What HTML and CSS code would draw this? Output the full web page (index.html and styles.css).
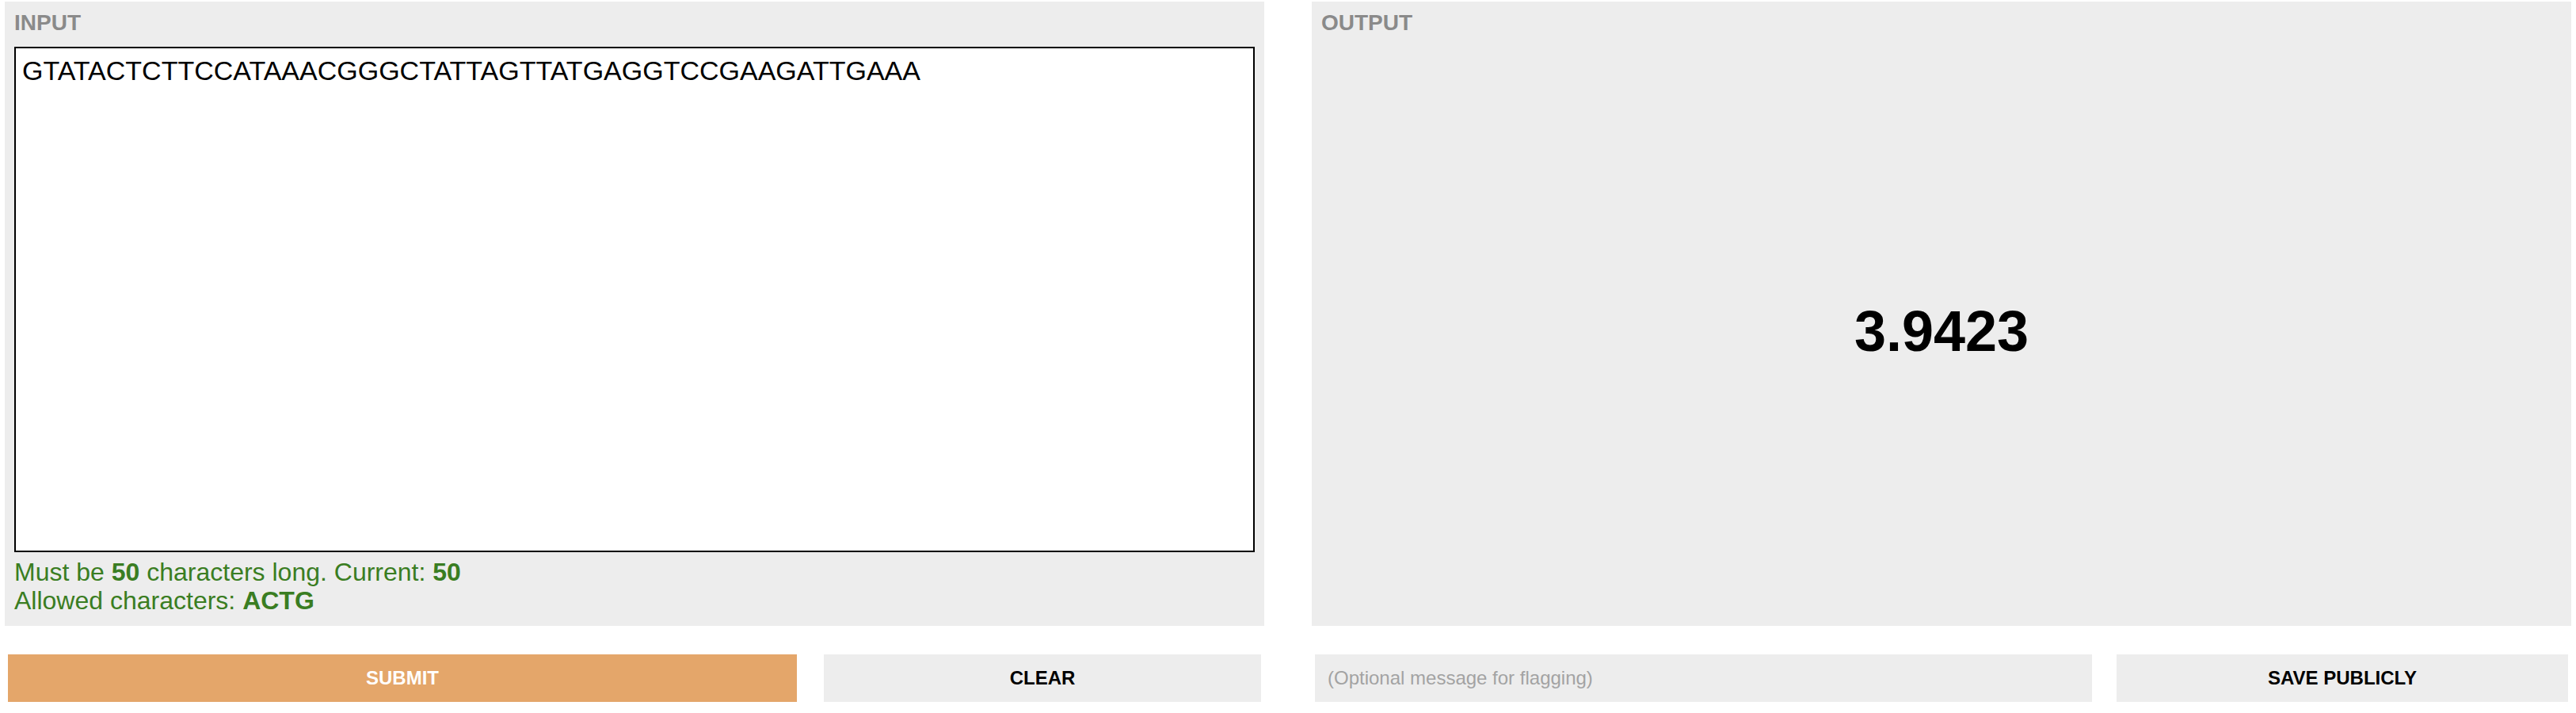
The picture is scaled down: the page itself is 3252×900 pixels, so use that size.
FILE: index.html
```html
<!DOCTYPE html>
<html lang="en">
<head>
<meta charset="utf-8">
<title>Interface</title>
<link rel="stylesheet" href="styles.css">
</head>
<body>
  <div class="panels">
    <section class="panel panel-input">
      <div class="panel-label">Input</div>
      <textarea class="seq-box" spellcheck="false">GTATACTCTTCCATAAACGGGCTATTAGTTATGAGGTCCGAAGATTGAAA</textarea>
      <div class="hint">
        <div>Must be <b>50</b> characters long. Current: <b>50</b></div>
        <div>Allowed characters: <b>ACTG</b></div>
      </div>
    </section>
    <section class="panel panel-output">
      <div class="panel-label">Output</div>
      <div class="output-body">
        <div class="output-value">3.9423</div>
      </div>
    </section>
  </div>
  <div class="actions">
    <div class="group group-left">
      <button class="btn btn-submit">Submit</button>
      <button class="btn btn-clear">Clear</button>
    </div>
    <div class="group group-right">
      <input class="flag-input" type="text" placeholder="(Optional message for flagging)">
      <button class="btn btn-save">Save Publicly</button>
    </div>
  </div>
</body>
</html>
```

FILE: styles.css
```css
html, body {
  margin: 0;
  padding: 0;
  background: #ffffff;
}

body {
  font-family: "Liberation Sans", Arial, Helvetica, sans-serif;
  color: #000;
}

.panels {
  display: flex;
  gap: 60px;
  padding: 2px 6px 0 6px;
}

.panel {
  flex: 1 1 0;
  height: 788px;
  background: #ededed;
  box-sizing: border-box;
  padding: 0 12px;
  display: flex;
  flex-direction: column;
}

.panel-label {
  margin-top: 11px;
  font-size: 28px;
  line-height: 32px;
  font-weight: bold;
  text-transform: uppercase;
  color: #8a8a8a;
}

.seq-box {
  display: block;
  margin-top: 14px;
  height: 638px;
  width: 100%;
  box-sizing: border-box;
  border: 2px solid #000;
  border-radius: 0;
  background: #fff;
  padding: 9px 8px;
  font-family: "Liberation Sans", Arial, Helvetica, sans-serif;
  font-size: 34px;
  line-height: 39px;
  color: #000;
  resize: none;
  outline: none;
}

.hint {
  margin-top: 7px;
  font-size: 32px;
  line-height: 36px;
  color: #3a7d22;
}

.hint b {
  font-weight: bold;
}

.output-body {
  flex: 1;
  display: flex;
  align-items: center;
  justify-content: center;
}

.output-value {
  font-size: 72px;
  font-weight: bold;
  color: #000;
}

.actions {
  display: flex;
  gap: 60px;
  padding: 0 6px;
  margin-top: 36px;
}

.group {
  flex: 1 1 0;
  display: flex;
  height: 60px;
}

.group-left {
  padding: 0 5px 0 4px;
  gap: 34px;
}

.group-right {
  padding: 0 4px 0 3px;
  gap: 31px;
}

.btn {
  border: none;
  border-radius: 0;
  margin: 0;
  padding: 0;
  height: 60px;
  font-family: "Liberation Sans", Arial, Helvetica, sans-serif;
  font-size: 24px;
  font-weight: bold;
  text-transform: uppercase;
  background: #ededed;
  color: #000;
  cursor: pointer;
}

.btn-submit {
  flex: 0 0 996px;
  background: #e4a66a;
  color: #fff;
}

.btn-clear {
  flex: 1 1 0;
}

.flag-input {
  flex: 0 0 981px;
  box-sizing: border-box;
  height: 60px;
  margin: 0;
  border: none;
  border-radius: 0;
  background: #ededed;
  padding: 0 16px;
  font-family: "Liberation Sans", Arial, Helvetica, sans-serif;
  font-size: 24px;
  color: #000;
  outline: none;
}

.flag-input::placeholder {
  color: #a3a3a3;
  opacity: 1;
}

.btn-save {
  flex: 1 1 0;
}
```
